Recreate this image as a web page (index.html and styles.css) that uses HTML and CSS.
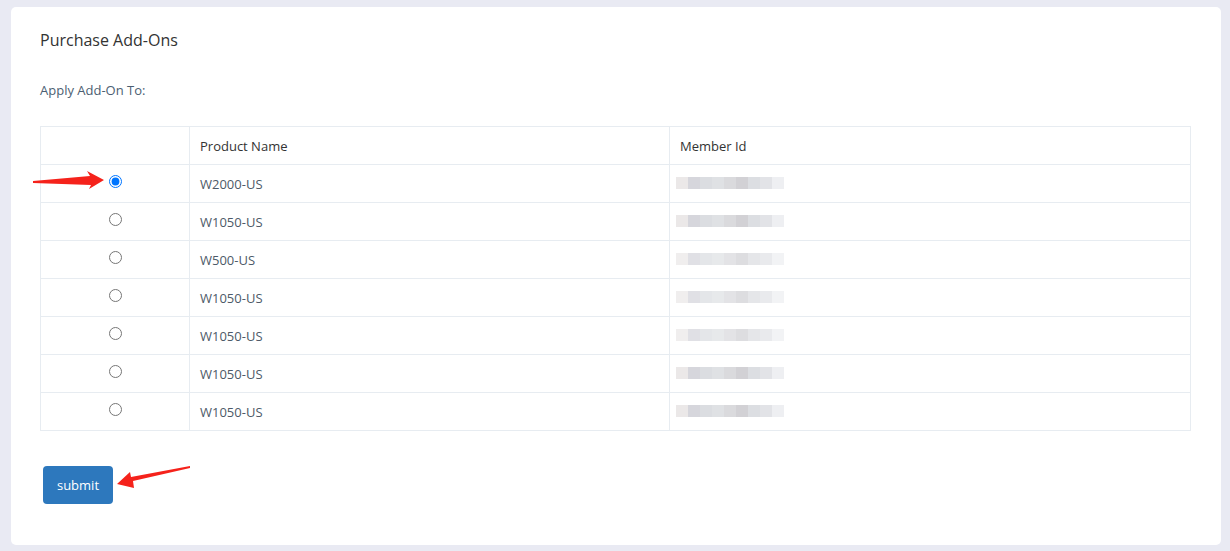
FILE: index.html
```html
<!DOCTYPE html>
<html>
<head>
<meta charset="utf-8">
<link rel="stylesheet" href="styles.css">
</head>
<body>
<div class="card">
  <h3 class="title">Purchase Add-Ons</h3>
  <div class="label">Apply Add-On To:</div>
  <table class="grid">
    <thead>
      <tr><th class="c-sel"></th><th class="c-name">Product Name</th><th>Member Id</th></tr>
    </thead>
    <tbody>
      <tr><td class="c-sel"><input type="radio" name="p" checked></td><td>W2000-US</td><td><div class="blur"><i class="b1"></i><i class="b2"></i><i class="b3"></i><i class="b4"></i><i class="b5"></i><i class="b6"></i><i class="b7"></i><i class="b8"></i><i class="b9"></i></div></td></tr>
      <tr><td class="c-sel"><input type="radio" name="p"></td><td>W1050-US</td><td><div class="blur"><i class="b1"></i><i class="b2"></i><i class="b3"></i><i class="b4"></i><i class="b5"></i><i class="b6"></i><i class="b7"></i><i class="b8"></i><i class="b9"></i></div></td></tr>
      <tr><td class="c-sel"><input type="radio" name="p"></td><td>W500-US</td><td><div class="blur soft"><i class="b1"></i><i class="b2"></i><i class="b3"></i><i class="b4"></i><i class="b5"></i><i class="b6"></i><i class="b7"></i><i class="b8"></i><i class="b9"></i></div></td></tr>
      <tr><td class="c-sel"><input type="radio" name="p"></td><td>W1050-US</td><td><div class="blur soft"><i class="b1"></i><i class="b2"></i><i class="b3"></i><i class="b4"></i><i class="b5"></i><i class="b6"></i><i class="b7"></i><i class="b8"></i><i class="b9"></i></div></td></tr>
      <tr><td class="c-sel"><input type="radio" name="p"></td><td>W1050-US</td><td><div class="blur soft"><i class="b1"></i><i class="b2"></i><i class="b3"></i><i class="b4"></i><i class="b5"></i><i class="b6"></i><i class="b7"></i><i class="b8"></i><i class="b9"></i></div></td></tr>
      <tr><td class="c-sel"><input type="radio" name="p"></td><td>W1050-US</td><td><div class="blur"><i class="b1"></i><i class="b2"></i><i class="b3"></i><i class="b4"></i><i class="b5"></i><i class="b6"></i><i class="b7"></i><i class="b8"></i><i class="b9"></i></div></td></tr>
      <tr><td class="c-sel"><input type="radio" name="p"></td><td>W1050-US</td><td><div class="blur"><i class="b1"></i><i class="b2"></i><i class="b3"></i><i class="b4"></i><i class="b5"></i><i class="b6"></i><i class="b7"></i><i class="b8"></i><i class="b9"></i></div></td></tr>
    </tbody>
  </table>
  <button class="btn" type="button">submit</button>
</div>
<svg class="overlay" width="1230" height="551" viewBox="0 0 1230 551">
  <polygon fill="#f5221b" points="33,181 90,176 87,171 104,180 89,189 91,185 33,183"/>
  <polygon fill="#f5221b" points="190,466 190,468 133,481 134,488 117,484 130,472 131,477"/>
</svg>
</body>
</html>
```

FILE: styles.css
```css
html, body {
  margin: 0;
  padding: 0;
}
body {
  background: #e9eaf3;
  font-family: "Open Sans", "Liberation Sans", sans-serif;
  font-size: 13px;
  color: #555;
  width: 1230px;
  height: 551px;
  overflow: hidden;
  position: relative;
}
.card {
  margin: 7px 9px 0 11px;
  height: 538px;
  box-sizing: border-box;
  background: #fff;
  border-radius: 5px;
  padding: 22px 30px 0 29px;
}
.title {
  margin: 0;
  font-size: 16px;
  font-weight: 400;
  line-height: 22px;
  color: #333;
}
.label {
  margin-top: 30px;
  line-height: 18px;
  color: #4b5e72;
}
.grid {
  margin-top: 27px;
  width: 100%;
  border-collapse: collapse;
  border: 1px solid #e7ecf1;
}
.grid th, .grid td {
  border: 1px solid #e7ecf1;
  height: 38px;
  padding: 0 10px;
  text-align: left;
  font-weight: 400;
  box-sizing: border-box;
}
.grid th {
  color: #333;
}
.grid td {
  color: #4d5a68;
}
.grid .c-sel {
  width: 149px;
  text-align: center;
  padding: 0;
}
.grid .c-name {
  width: 480px;
}
.c-sel input {
  margin: 0;
  width: 13px;
  height: 13px;
  vertical-align: middle;
  position: relative;
  top: -4px;
}
.blur {
  display: flex;
  margin-left: -4px;
  height: 12px;
  position: relative;
  top: -1px;
}
.blur i {
  width: 12px;
  height: 12px;
  display: block;
}
.blur .b1 { background: #ebe8e8; }
.blur .b2 { background: #d6d6dc; }
.blur .b3 { background: #dbdde1; }
.blur .b4 { background: #dfe1e4; }
.blur .b5 { background: #dadadd; }
.blur .b6 { background: #d2d1d5; }
.blur .b7 { background: #dcdee2; }
.blur .b8 { background: #e2e3e7; }
.blur .b9 { background: #eeeff2; }
.blur.soft i { opacity: 0.75; }
.btn {
  margin: 35px 0 0 3px;
  width: 70px;
  height: 38px;
  border: 0;
  border-radius: 4px;
  background: #2d78bd;
  color: #fff;
  font-family: "Open Sans", "Liberation Sans", sans-serif;
  font-size: 13px;
  padding: 0;
  cursor: pointer;
}
.overlay {
  position: absolute;
  left: 0;
  top: 0;
  pointer-events: none;
}
```
